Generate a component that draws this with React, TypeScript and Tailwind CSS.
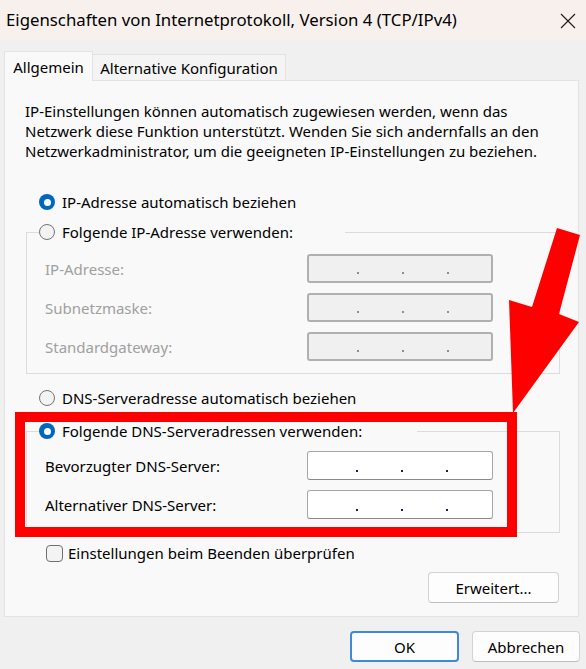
import React from "react";

function Radio({ checked }: { checked?: boolean }) {
  if (checked) {
    return (
      <span className="w-[16px] h-[16px] rounded-full bg-[#0067c0] flex items-center justify-center shrink-0">
        <span className="w-[7px] h-[7px] rounded-full bg-white" />
      </span>
    );
  }
  return <span className="w-[16px] h-[16px] rounded-full border border-[#737373] bg-[#f3f3f3] shrink-0" />;
}

function IpBox({ disabled }: { disabled?: boolean }) {
  const dot = disabled ? "bg-[#8a8aa0]" : "bg-[#1c1c5a]";
  return (
    <div
      className={
        "w-[186px] h-[29px] rounded-[3px] flex items-end pb-[7px] pl-[48px] gap-[43px] " +
        (disabled
          ? "bg-[#f0f0f0] border-2 border-[#b0b0b0]"
          : "bg-white border border-[#a6a6a6] border-b-[#8a8a8a]")
      }
    >
      <span className={"w-[2px] h-[2px] " + dot} />
      <span className={"w-[2px] h-[2px] " + dot} />
      <span className={"w-[2px] h-[2px] " + dot} />
    </div>
  );
}

function Row({ label, disabled }: { label: string; disabled?: boolean }) {
  return (
    <div className="flex items-center h-[29px] ml-[18px]">
      <span className={"w-[262px] " + (disabled ? "text-[#a0a0a0]" : "text-black")}>{label}</span>
      <IpBox disabled={disabled} />
    </div>
  );
}

export default function App() {
  return (
    <div className="relative w-[586px] h-[669px] overflow-hidden bg-[#f0f0f0] font-['Noto_Sans',sans-serif] text-[15px] leading-[20px] text-black">
      {/* Title bar */}
      <div className="h-[40px] bg-[#f8f0ec] flex items-center justify-between pl-[6px] pr-[10px]">
        <span className="text-[16.8px]">Eigenschaften von Internetprotokoll, Version 4 (TCP/IPv4)</span>
        <svg width="16" height="16" viewBox="0 0 16 16" className="mt-[2px]">
          <path d="M1 1 L15 15 M15 1 L1 15" stroke="#1a1a1a" strokeWidth="1.1" fill="none" />
        </svg>
      </div>

      <div className="px-[4px] pt-[11px]">
        {/* Tabs */}
        <div className="flex items-end h-[29px]">
          <div className="relative z-10 -mb-px w-[89px] h-[30px] border border-b-0 border-[#e3e3e3] bg-[#f9f9f9] flex items-center justify-center">
            Allgemein
          </div>
          <div className="w-[193px] h-[26px] border border-b-0 border-l-0 border-[#e3e3e3] bg-[#f4f4f4] flex items-center justify-center">
            Alternative Konfiguration
          </div>
        </div>

        {/* Panel */}
        <div className="w-[575px] h-[537px] border border-[#e3e3e3] bg-[#f9f9f9] flex flex-col">
          <p className="ml-[20px] mt-[20px] whitespace-nowrap">
            IP-Einstellungen können automatisch zugewiesen werden, wenn das
            <br />
            Netzwerk diese Funktion unterstützt. Wenden Sie sich andernfalls an den
            <br />
            Netzwerkadministrator, um die geeigneten IP-Einstellungen zu beziehen.
          </p>

          <div className="ml-[34px] mt-[31px] h-[20px] flex items-center gap-[7px]">
            <Radio checked />
            <span>IP-Adresse automatisch beziehen</span>
          </div>

          <fieldset className="ml-[21px] mt-[10px] w-[534px] border border-[#dcdcdc] pb-[12px]">
            <legend className="ml-[12px] w-[306px] h-[20px] flex items-center gap-[7px]">
              <Radio />
              <span>Folgende IP-Adresse verwenden:</span>
            </legend>
            <div className="mt-[12px] flex flex-col gap-[10px]">
              <Row label="IP-Adresse:" disabled />
              <Row label="Subnetzmaske:" disabled />
              <Row label="Standardgateway:" disabled />
            </div>
          </fieldset>

          <div className="ml-[34px] mt-[14px] h-[20px] flex items-center gap-[7px]">
            <Radio />
            <span>DNS-Serveradresse automatisch beziehen</span>
          </div>

          <fieldset className="ml-[21px] mt-[13px] w-[534px] border border-[#dcdcdc] pb-[13px]">
            <legend className="ml-[12px] w-[378px] h-[20px] flex items-center gap-[7px]">
              <Radio checked />
              <span>Folgende DNS-Serveradressen verwenden:</span>
            </legend>
            <div className="mt-[10px] flex flex-col gap-[10px]">
              <Row label="Bevorzugter DNS-Server:" />
              <Row label="Alternativer DNS-Server:" />
            </div>
          </fieldset>

          <div className="ml-[41px] mt-[10px] h-[20px] flex items-center gap-[5px]">
            <span className="w-[17px] h-[17px] rounded-[4px] border border-[#6f6f6f] bg-[#f3f3f3] shrink-0" />
            <span>Einstellungen beim Beenden überprüfen</span>
          </div>

          <div className="mt-[9px] self-end mr-[19px] w-[131px] h-[31px] rounded-[4px] border border-[#d3d3d3] border-b-[#bdbdbd] bg-[#fdfdfd] flex items-center justify-center">
            Erweitert...
          </div>
        </div>

        {/* Dialog buttons */}
        <div className="mt-[14px] flex justify-end gap-[13px] pr-[2px]">
          <div className="w-[109px] h-[31px] rounded-[4px] border-2 border-[#3f8ad6] bg-[#fdfdfd] flex items-center justify-center">
            OK
          </div>
          <div className="w-[108px] h-[31px] rounded-[4px] border border-[#d3d3d3] border-b-[#bdbdbd] bg-[#fdfdfd] flex items-center justify-center">
            Abbrechen
          </div>
        </div>
      </div>

      {/* Annotation overlay */}
      <div className="absolute left-[15px] top-[412px] w-[502px] h-[125px] border-[10px] border-[#ff0000]" />
      <svg className="absolute left-0 top-0" width="586" height="669" viewBox="0 0 586 669">
        <polygon
          points="557,228 580,235 559,314 579,322 513,413 509,300 532,307"
          fill="#ff0000"
        />
      </svg>
    </div>
  );
}
